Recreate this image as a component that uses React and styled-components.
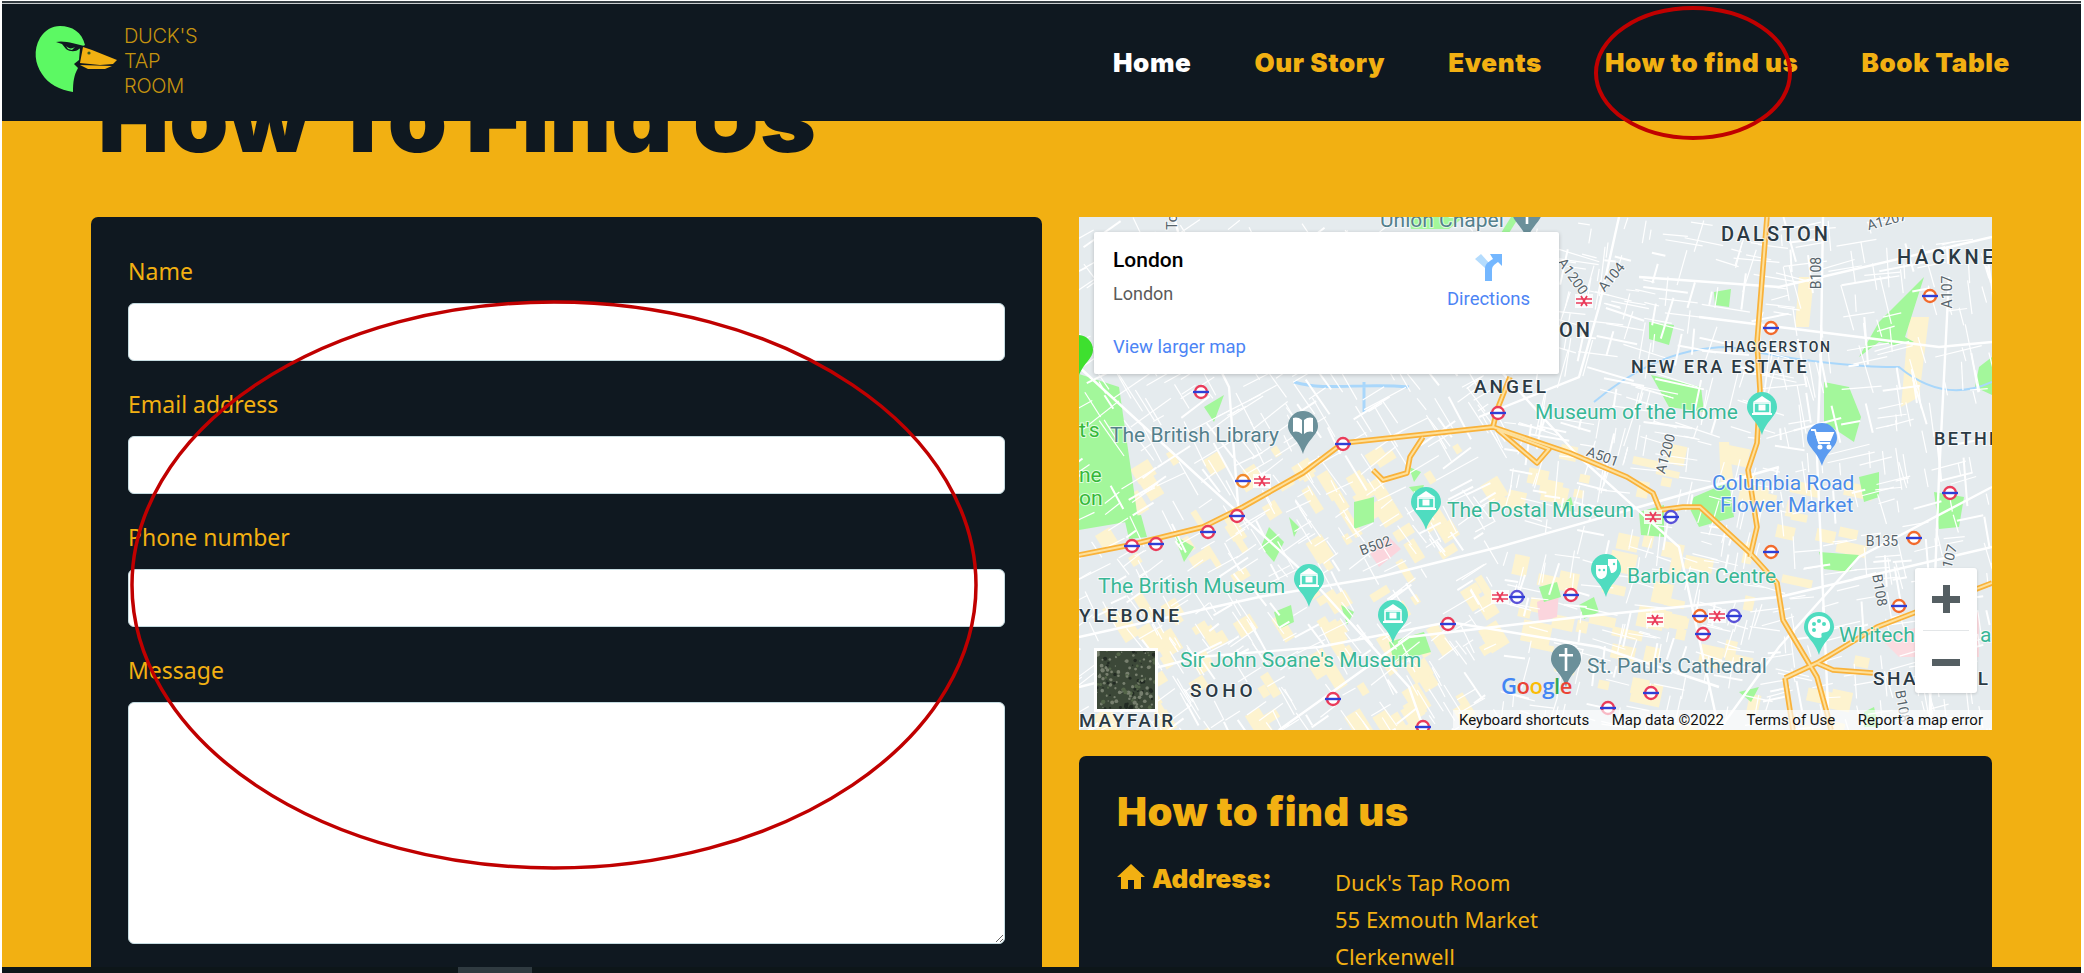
import styled, { createGlobalStyle } from "styled-components";

const YELLOW = "#f2b012";
const DARK = "#0f1820";

const GlobalStyle = createGlobalStyle`
	html, body {
		margin: 0;
		padding: 0;
		height: 100%;
		overflow: hidden;
		background: #fff;
	}
	* {
		box-sizing: border-box;
	}
`;

// --- map data, coordinates are px inside the 913x513 map ---
const seeded = seed => () => {
	seed |= 0;
	seed = (seed + 0x6d2b79f5) | 0;
	let t = Math.imul(seed ^ (seed >>> 15), 1 | seed);
	t = (t + Math.imul(t ^ (t >>> 7), 61 | t)) ^ t;
	return ((t ^ (t >>> 14)) >>> 0) / 4294967296;
};

const makeStreets = () => {
	const rnd = seeded(42);
	const list = [];
	for (let i = 0; i < 1300; i++) {
		const x = rnd() * 913;
		const y = rnd() * 513;
		const base = x < 420 ? 58 : x < 700 ? 12 : 80;
		const angle = ((base + (rnd() < 0.5 ? 0 : 90) + (rnd() - 0.5) * 14) * Math.PI) / 180;
		const len = 10 + rnd() * (y > 250 ? 26 : 40);
		list.push({
			x1: x,
			y1: y,
			x2: x + Math.cos(angle) * len,
			y2: y + Math.sin(angle) * len,
			w: rnd() < 0.2 ? 2 : 1.2,
		});
	}
	return list;
};
const streets = makeStreets();

// little pale yellow blocks, the built up parts of the map
const makeBlocks = () => {
	const rnd = seeded(11);
	const list = [];
	for (let i = 0; i < 190; i++) {
		const x = 20 + rnd() * 760;
		const y = 225 + rnd() * 285;
		list.push({
			x,
			y,
			w: 8 + rnd() * 24,
			h: 6 + rnd() * 16,
			rot: x < 420 ? 58 : 12,
		});
	}
	return list;
};
const blocks = makeBlocks();

const mainRoads = [
	"M0 150 L120 260 L230 360 L330 470 L345 513",
	"M95 0 L130 130 L150 170 L160 300",
	"M300 60 L400 130 L500 240 L600 330 L640 513",
	"M540 0 L520 90 L500 160 L400 200",
	"M0 420 L180 380 L300 360 L420 330 L560 290 L700 250",
	"M200 513 L330 420 L500 400 L700 380 L913 330",
	"M0 470 L120 440 L240 430 L370 405 L520 430 L640 470",
	"M744 0 L742 130 L738 240 L750 513",
	"M620 100 L700 110 L860 130 L913 125",
	"M560 60 L700 70 L913 20",
	"M870 60 L860 260 L850 513",
	"M640 513 L700 430 L780 340 L913 270",
];

const orangeRoads = [
	"M0 338 L51 328 L124 310 L164 290 L224 256 L264 226 L414 210 L491 236 L548 260 L574 276 L581 293 L604 290 L621 290 L671 336 L698 366 L704 403 L738 460 L748 496 L752 513",
	"M688 0 L678 126 L681 173 L678 226 L669 253 L678 310 L671 340",
	"M706 461 L738 446 L798 410 L913 366",
	"M738 446 L754 453 L794 456",
	"M706 461 L714 513",
	"M414 210 L418 193 L431 160",
	"M344 220 L331 240 L328 256 L304 263 L294 253",
	"M419 213 L470 232 L458 246 Z",
];

const parks = [
	"M0 157 L40 170 L52 253 L59 303 L0 313 Z",
	"M330 0 L385 0 L370 12 L332 12 Z",
	"M432 0 L440 0 L415 40 L404 45 Z",
	"M570 105 L595 108 L590 128 L570 122 Z",
	"M572 158 L622 170 L625 195 L590 190 Z",
	"M780 140 L800 105 L845 60 L826 120 L835 125 L815 128 L800 125 Z",
	"M745 165 L770 170 L782 200 L775 225 L745 205 Z",
	"M913 140 L900 150 L896 170 L913 178 Z",
	"M635 75 L652 72 L650 90 L636 88 Z",
	"M125 190 L145 178 L135 205 Z",
	"M330 250 L342 255 L335 265 Z",
	"M190 310 L205 325 L195 345 L182 330 Z",
	"M210 300 L220 310 L215 320 Z",
	"M275 285 L295 280 L295 305 L275 312 Z",
	"M330 270 L345 268 L340 282 Z",
	"M95 318 L115 330 L105 345 Z",
	"M195 395 L212 388 L215 405 L200 412 Z",
	"M262 388 L275 395 L268 408 Z",
	"M310 425 L345 415 L352 435 L315 445 Z",
	"M45 300 L62 298 L68 320 L50 322 Z",
	"M615 280 L650 265 L655 300 L620 310 L610 290 Z",
	"M480 290 L492 280 L496 296 Z",
	"M560 295 L585 288 L585 320 L562 318 Z",
	"M500 388 L515 380 L520 395 L505 402 Z",
	"M780 260 L800 255 L800 280 L785 285 Z",
	"M855 275 L885 280 L880 310 L860 312 Z",
	"M740 335 L780 338 L770 355 L745 352 Z",
	"M785 495 L795 490 L800 510 L785 510 Z",
	"M460 370 L478 365 L482 380 L465 385 Z",
	"M660 475 L680 470 L672 485 Z",
];

const tubes = [
	[122, 175, "#ea3b5a"], [264, 227, "#ea3b5a"], [419, 196, "#ea3b5a"],
	[851, 79, "#f26a2c"], [692, 111, "#f26a2c"], [164, 264, "#f28a2c"],
	[158, 299, "#ea3b5a"], [129, 315, "#ea3b5a"], [77, 327, "#ea3b5a"],
	[53, 329, "#ea3b5a"], [369, 407, "#ea3b5a"], [438, 380, "#5a52d8"],
	[492, 378, "#ea3b5a"], [254, 482, "#ea3b5a"], [344, 510, "#ea3b5a"],
	[592, 300, "#5a52d8"], [692, 335, "#f26a2c"], [871, 276, "#ea3b5a"],
	[835, 321, "#f26a2c"], [820, 389, "#f26a2c"], [621, 399, "#f26a2c"],
	[655, 399, "#5a52d8"], [624, 417, "#ea3b5a"], [572, 476, "#ea3b5a"],
	[529, 491, "#ea3b5a"],
];

const rails = [[505, 84], [183, 264], [421, 380], [574, 300], [638, 399], [576, 403]];

const TEAL_PIN = "#4fdcc0";
const GREY_PIN = "#6b909a";
const BLUE_PIN = "#5b9bf0";

const pins = [
	[683, 190, TEAL_PIN, "museum"],
	[347, 285, TEAL_PIN, "museum"],
	[230, 362, TEAL_PIN, "museum"],
	[314, 398, TEAL_PIN, "museum"],
	[527, 352, TEAL_PIN, "masks"],
	[740, 410, TEAL_PIN, "palette"],
	[224, 209, GREY_PIN, "book"],
	[448, -5, GREY_PIN, "cross"],
	[487, 442, GREY_PIN, "cross"],
	[743, 221, BLUE_PIN, "cart"],
	[-1, 133, "#3ee02f", "none"],
];

const areaLabels = [
	["DALSTON", 642, 24, 20, 3],
	["HACKNEY", 818, 47, 20, 3.6],
	["ISLINGTON", 385, 120, 20, 3],
	["NEW ERA ESTATE", 552, 156, 18, 2.4],
	["HAGGERSTON", 645, 135, 14, 1.6],
	["ANGEL", 395, 176, 19, 3],
	["BETHNAL", 855, 228, 18, 2.4],
	["YLEBONE", 0, 405, 19, 3],
	["SOHO", 111, 480, 19, 3.8],
	["MAYFAIR", 0, 510, 19, 2.6],
	["SHADWELL", 794, 468, 19, 2.4],
];

const placeLabels = [
	["Museum of the Home", 456, 202, "#38b796"],
	["The Postal Museum", 368, 300, "#38b796"],
	["The British Museum", 19, 376, "#38b796"],
	["Sir John Soane's Museum", 101, 450, "#38b796"],
	["Barbican Centre", 548, 366, "#38b796"],
	["Whitechapel", 760, 425, "#38b796"],
	["al", 901, 425, "#38b796"],
	["The British Library", 31, 225, "#54808c"],
	["St. Paul's Cathedral", 508, 456, "#54808c"],
	["Union Chapel", 301, 10, "#54808c"],
	["Columbia Road", 633, 273, "#4a8be8"],
	["Flower Market", 641, 295, "#4a8be8"],
	["t's", 0, 220, "#35b83a"],
	["ne", 0, 265, "#35b83a"],
	["on", 0, 288, "#35b83a"],
];

const roadCodes = [
	["A104", 536, 63, -50],
	["A1200", 490, 62, 55],
	["B108", 742, 56, -90],
	["A107", 873, 75, -90],
	["A1207", 809, 8, -15],
	["A501", 522, 244, 20],
	["A1200", 591, 238, -75],
	["B502", 298, 333, -20],
	["B135", 803, 329, 0],
	["B108", 796, 374, 80],
	["A107", 874, 345, -75],
	["B108", 819, 490, 80],
	["To", 98, 5, -90],
];

const PinGlyph = ({ type }) => {
	if (type === "museum") {
		return (
			<g fill="#fff">
				<path d="M-9 -5 L0 -11 L9 -5 Z" />
				<rect x="-8" y="-4" width="16" height="10" fill="none" stroke="#fff" strokeWidth="1.6" />
				<rect x="-3.5" y="-2.5" width="7" height="6" />
				<rect x="-10" y="6" width="20" height="2" />
			</g>
		);
	}
	if (type === "book") {
		return <path d="M-1 -6 C-4 -9 -8 -9 -10 -8 V6 C-8 5 -4 5 -1 8 Z M1 -6 C4 -9 8 -9 10 -8 V6 C8 5 4 5 1 8 Z" fill="#fff" />;
	}
	if (type === "cross") {
		return <path d="M-1.3 -11 H1.3 V-5 H7 V-2.6 H1.3 V12 H-1.3 V-2.6 H-7 V-5 H-1.3 Z" fill="#fff" />;
	}
	if (type === "cart") {
		return (
			<g fill="none" stroke="#fff" strokeWidth="1.8">
				<path d="M-11 -8 H-7 L-3 5 H8" />
				<path d="M-6 -5 H11 L8 2 H-4 Z" fill="#fff" />
				<circle cx="-2" cy="9" r="1.6" fill="#fff" />
				<circle cx="7" cy="9" r="1.6" fill="#fff" />
			</g>
		);
	}
	if (type === "masks") {
		return (
			<g fill="#fff">
				<path d="M-10 -4 H1 V3 C1 8 -3 10 -5 10 C-8 10 -10 7 -10 3 Z" />
				<path d="M2 -10 H11 V-2 C11 2 8 4 5 4 L3 -3 H2 Z" />
				<circle cx="-6.5" cy="1" r="1.2" fill={TEAL_PIN} />
				<circle cx="-2" cy="1" r="1.2" fill={TEAL_PIN} />
				<circle cx="8" cy="-5" r="1.2" fill={TEAL_PIN} />
			</g>
		);
	}
	if (type === "palette") {
		return (
			<g>
				<path d="M0 -11 C8 -11 12 -5 11 1 C10 6 5 5 3 6 C1 8 5 11 0 11 C-7 11 -11 6 -11 0 C-11 -6 -7 -11 0 -11 Z" fill="#fff" />
				<circle cx="-5" cy="-3" r="2" fill={TEAL_PIN} />
				<circle cx="0" cy="-6" r="2" fill={TEAL_PIN} />
				<circle cx="5" cy="-3" r="2" fill={TEAL_PIN} />
				<circle cx="-5" cy="3" r="2" fill={TEAL_PIN} />
			</g>
		);
	}
	return null;
};

const MapDrawing = () => (
	<MapSvg viewBox="0 0 913 513">
		<rect width="913" height="513" fill="#e5ebee" />
		{blocks.map((b, i) => (
			<rect
				key={i}
				x={b.x}
				y={b.y}
				width={b.w}
				height={b.h}
				fill="#fdf3cf"
				transform={`rotate(${b.rot} ${b.x} ${b.y})`}
			/>
		))}
		<path d="M640 225 L650 225 L655 270 L642 270 Z M720 60 L735 60 L730 110 L716 110 Z M830 100 L850 100 L840 180 L822 190 Z" fill="#fdf3cf" />
		<path d="M290 335 L310 320 L322 332 L300 350 Z" fill="#fbd5dd" />
		<path d="M458 385 L480 375 L478 400 L460 405 Z" fill="#fbd5dd" />
		<path d="M800 420 L900 395 L900 440 L820 440 Z" fill="#fbdbe0" />
		{parks.map((d, i) => (
			<path key={i} d={d} fill="#a3f79b" />
		))}
		<path
			d="M515 185 C545 160 590 130 650 130 C700 140 760 150 820 150 C850 175 880 180 913 165"
			fill="none"
			stroke="#a9d7fb"
			strokeWidth="2"
		/>
		<path d="M215 165 C250 175 280 165 330 170 M285 165 V195" fill="none" stroke="#a9d7fb" strokeWidth="3" />
		{streets.map((s, i) => (
			<line key={i} x1={s.x1} y1={s.y1} x2={s.x2} y2={s.y2} stroke="#fff" strokeWidth={s.w} />
		))}
		{mainRoads.map((d, i) => (
			<path key={i} d={d} fill="none" stroke="#fff" strokeWidth="2.4" />
		))}
		{orangeRoads.map((d, i) => (
			<path key={i} d={d} fill="none" stroke="#f9b23a" strokeWidth="5.5" strokeLinejoin="round" />
		))}
		{orangeRoads.map((d, i) => (
			<path key={i} d={d} fill="none" stroke="#fde09c" strokeWidth="2" strokeLinejoin="round" />
		))}
		{rails.map(([x, y], i) => (
			<g key={i}>
				<rect x={x - 9} y={y - 7} width="18" height="14" fill="#fff" opacity="0.8" />
				<path
					d={`M${x - 8} ${y - 2} H${x + 8} M${x - 8} ${y + 2} H${x + 8} M${x - 3} ${y - 5} L${x + 3} ${y + 5} M${x + 3} ${y - 5} L${x - 3} ${y + 5}`}
					stroke="#ea3b5a"
					strokeWidth="1.7"
				/>
			</g>
		))}
		{tubes.map(([x, y, color], i) => (
			<g key={i}>
				<circle cx={x} cy={y} r="6" fill="#fff" stroke={color} strokeWidth="2.4" />
				<rect x={x - 8} y={y - 1.2} width="16" height="2.4" fill="#2f3fd6" />
			</g>
		))}
		{pins.map(([x, y, color, type], i) => (
			<g key={i} transform={`translate(${x} ${y})`}>
				<path d="M-15 0 A15 15 0 1 1 15 0 C15 9 4 14 0 28 C-4 14 -15 9 -15 0 Z" fill={color} />
				<PinGlyph type={type} />
			</g>
		))}
		{areaLabels.map(([t, x, y, size, ls]) => (
			<MapLabel key={t} x={x} y={y} fontSize={size} letterSpacing={ls} fontWeight="500" fill="#2b3a44">
				{t}
			</MapLabel>
		))}
		{placeLabels.map(([t, x, y, color]) => (
			<MapLabel key={t} x={x} y={y} fontSize="21" fill={color}>
				{t}
			</MapLabel>
		))}
		{roadCodes.map(([t, x, y, rot], i) => (
			<MapLabel key={i} fontSize="14" fill="#56646b" textAnchor="middle" transform={`translate(${x} ${y}) rotate(${rot})`}>
				{t}
			</MapLabel>
		))}
		<GoogleMark x="422" y="477">
			<tspan fill="#4285f4">G</tspan>
			<tspan fill="#ea4335">o</tspan>
			<tspan fill="#fbbc05">o</tspan>
			<tspan fill="#4285f4">g</tspan>
			<tspan fill="#34a853">l</tspan>
			<tspan fill="#ea4335">e</tspan>
		</GoogleMark>
	</MapSvg>
);

const SatelliteTile = () => {
	const rnd = seeded(7);
	const dots = Array.from({ length: 160 }, () => [rnd() * 58, rnd() * 58, 0.6 + rnd() * 1.6, rnd()]);
	return (
		<svg width="58" height="58" viewBox="0 0 58 58">
			<rect width="58" height="58" fill="#3c4838" />
			{dots.map(([x, y, r, c], i) => (
				<circle key={i} cx={x} cy={y} r={r} fill={c > 0.6 ? "#78806f" : c > 0.3 ? "#232b24" : "#55664a"} />
			))}
		</svg>
	);
};

const DuckLogo = () => (
	<svg width="86" height="70" viewBox="33 24 86 70">
		<path
			d="M60 26 C72 26 82 32 85 45 L80 48 L79 60 L74 64 L78 68 C74 75 73 82 73 92 C60 90 48 84 42 74 C35 64 33 50 40 38 C45 30 52 26 60 26 Z"
			fill="#5cf963"
		/>
		<path d="M56 42 C64 40 76 44 85 46 L79 49 C76 52 70 52 66 49 L62 44 Z" fill={DARK} />
		<path d="M66 46 C69 49 72 49 75 47 L72 50 L68 49 Z" fill="#5cf963" />
		<path d="M83 47 L92 50 L117 60 L113 64 L100 65 L80 63 Z" fill={YELLOW} />
		<path d="M80 65 L112 66 L105 69 L88 69 Z" fill={YELLOW} />
		<circle cx="89" cy="53" r="1.6" fill="#3a5a20" />
	</svg>
);

const DirectionsIcon = () => (
	<svg width="27" height="28" viewBox="0 0 27 28">
		<path d="M0 6 L6 1 L15 11 V15 L10 15 Z" fill="#b5dcfd" />
		<path d="M10 28 V16 C10 11 13 9 18 6 L15 1 H27 V13 L23 9 C19 12 17 13 17 17 V28 Z" fill="#74b7ff" />
	</svg>
);

const App = () => (
	<Frame>
		<GlobalStyle />
		<TopLine />
		<Nav>
			<Brand>
				<DuckLogo />
				<BrandText>
					<span>DUCK'S</span>
					<span>TAP</span>
					<span>ROOM</span>
				</BrandText>
			</Brand>
			<NavLinks>
				<NavLink href="#" $active>Home</NavLink>
				<NavLink href="#">Our Story</NavLink>
				<NavLink href="#">Events</NavLink>
				<NavLink href="#">How to find us</NavLink>
				<NavLink href="#">Book Table</NavLink>
			</NavLinks>
		</Nav>
		<Main>
			<PageTitle>How To Find Us</PageTitle>
			<Columns>
				<FormCard>
					<Field>
						<FieldLabel>Name</FieldLabel>
						<TextInput type="text" />
					</Field>
					<Field>
						<FieldLabel>Email address</FieldLabel>
						<TextInput type="email" />
					</Field>
					<Field>
						<FieldLabel>Phone number</FieldLabel>
						<TextInput type="text" />
					</Field>
					<Field>
						<FieldLabel>Message</FieldLabel>
						<MessageInput />
					</Field>
				</FormCard>
				<SideColumn>
					<MapBox>
						<MapDrawing />
						<PlaceCard>
							<PlaceInfo>
								<PlaceName>London</PlaceName>
								<PlaceSub>London</PlaceSub>
								<MapLink>View larger map</MapLink>
							</PlaceInfo>
							<Directions>
								<DirectionsIcon />
								<MapLink>Directions</MapLink>
							</Directions>
						</PlaceCard>
						<Satellite>
							<SatelliteTile />
						</Satellite>
						<ZoomBox>
							<ZoomButton>
								<ZoomBar />
								<ZoomBar $upright />
							</ZoomButton>
							<ZoomDivider />
							<ZoomButton>
								<ZoomBar />
							</ZoomButton>
						</ZoomBox>
						<Attribution>
							<span>Keyboard shortcuts</span>
							<span>Map data ©2022</span>
							<span>Terms of Use</span>
							<span>Report a map error</span>
						</Attribution>
					</MapBox>
					<InfoCard>
						<InfoTitle>How to find us</InfoTitle>
						<InfoRow>
							<InfoLabel>
								<svg width="28" height="25" viewBox="0 0 28 25">
									<path d="M14 0 L28 13 H24 V25 H17 V16 H11 V25 H4 V13 H0 Z" fill={YELLOW} />
								</svg>
								Address:
							</InfoLabel>
							<InfoValue>
								<span>Duck's Tap Room</span>
								<span>55 Exmouth Market</span>
								<span>Clerkenwell</span>
							</InfoValue>
						</InfoRow>
					</InfoCard>
				</SideColumn>
			</Columns>
		</Main>
		<ScrollBar>
			<ScrollThumb />
		</ScrollBar>
		<Annotations viewBox="0 0 2084 973">
			<ellipse cx="1693" cy="73" rx="97" ry="65" fill="none" stroke="#c00000" strokeWidth="4" />
			<ellipse cx="554" cy="585" rx="422" ry="283" fill="none" stroke="#c00000" strokeWidth="3.5" />
		</Annotations>
	</Frame>
);

const Frame = styled.div`
	position: relative;
	display: flex;
	flex-direction: column;
	height: 100vh;
	overflow: hidden;
	border-left: 2px solid #fff;
	border-right: 3px solid #fff;
	background: ${YELLOW};
`;

const TopLine = styled.div`
	flex: none;
	height: 4px;
	background: linear-gradient(#fff 0 1px, #333b40 1px 3px, #c9cdcf 3px 4px);
`;

const Nav = styled.nav`
	flex: none;
	position: relative;
	z-index: 2;
	display: flex;
	justify-content: space-between;
	height: 117px;
	padding: 20px 71px 0 31px;
	background: ${DARK};
`;

const Brand = styled.div`
	display: flex;
	gap: 5px;
	height: 70px;
`;

const BrandText = styled.div`
	display: flex;
	flex-direction: column;
	font-family: "Inter", sans-serif;
	font-size: 20px;
	font-weight: 300;
	line-height: 25px;
	letter-spacing: -0.3px;
	color: #c4930f;
`;

const NavLinks = styled.div`
	display: flex;
	gap: 63px;
	padding-top: 23px;
`;

const NavLink = styled.a`
	font-family: "Inter", sans-serif;
	font-size: 26px;
	font-weight: 900;
	line-height: 32px;
	letter-spacing: 0.6px;
	text-decoration: none;
	color: ${props => (props.$active ? "#fff" : YELLOW)};
`;

const Main = styled.main`
	flex: 1;
	min-height: 0;
	overflow: hidden;
	padding: 0 89px;
`;

const PageTitle = styled.h1`
	margin: -51px 0 0 7px;
	font-family: "Inter", sans-serif;
	font-size: 95px;
	font-weight: 900;
	line-height: 96px;
	color: ${DARK};
`;

const Columns = styled.div`
	display: grid;
	grid-template-columns: 951px 913px;
	gap: 37px;
	margin-top: 51px;
`;

const FormCard = styled.form`
	display: flex;
	flex-direction: column;
	gap: 27px;
	padding: 38px 37px 24px;
	border-radius: 7px;
	background: ${DARK};
`;

const Field = styled.div`
	display: flex;
	flex-direction: column;
	gap: 15px;
`;

const FieldLabel = styled.label`
	font-family: "Noto Sans", sans-serif;
	font-size: 23px;
	line-height: 33px;
	color: ${YELLOW};
`;

const TextInput = styled.input`
	height: 58px;
	border: 1px solid #c5dbe0;
	border-radius: 6px;
	outline: none;
	background: #fff;
`;

const MessageInput = styled.textarea`
	height: 242px;
	border: 1px solid #c5dbe0;
	border-radius: 6px;
	outline: none;
	background: #fff;
`;

const SideColumn = styled.div`
	display: flex;
	flex-direction: column;
	gap: 26px;
`;

const MapBox = styled.div`
	position: relative;
	height: 513px;
	overflow: hidden;
`;

const MapSvg = styled.svg`
	display: block;
	width: 913px;
	height: 513px;
`;

const MapLabel = styled.text`
	font-family: "Roboto", sans-serif;
	paint-order: stroke;
	stroke: #ffffffaa;
	stroke-width: 2px;
`;

const GoogleMark = styled.text`
	font-family: "Open Sans", sans-serif;
	font-size: 22px;
	font-weight: 600;
	letter-spacing: -0.5px;
`;

const PlaceCard = styled.div`
	position: absolute;
	top: 15px;
	left: 15px;
	display: flex;
	justify-content: space-between;
	width: 465px;
	height: 142px;
	padding: 15px 29px 0 19px;
	border-radius: 2px;
	background: #fff;
	font-family: "Roboto", sans-serif;
	box-shadow: 0 1px 4px rgba(0, 0, 0, 0.2);
`;

const PlaceInfo = styled.div`
	display: flex;
	flex-direction: column;
`;

const PlaceName = styled.div`
	font-size: 21px;
	font-weight: 500;
	line-height: 26px;
	color: #000;
`;

const PlaceSub = styled.div`
	margin-top: 9px;
	font-size: 18px;
	line-height: 24px;
	color: #5b5b5b;
`;

const MapLink = styled.div`
	font-size: 18.5px;
	line-height: 24px;
	color: #4c84f5;
	${PlaceSub} + & {
		margin-top: 29px;
	}
`;

const Directions = styled.div`
	display: flex;
	flex-direction: column;
	align-items: center;
	gap: 6px;
	padding-top: 6px;
`;

const Satellite = styled.div`
	position: absolute;
	top: 431px;
	left: 15px;
	width: 64px;
	height: 64px;
	border: 3px solid #fff;
	line-height: 0;
`;

const ZoomBox = styled.div`
	position: absolute;
	top: 351px;
	left: 836px;
	display: flex;
	flex-direction: column;
	align-items: center;
	width: 62px;
	height: 125px;
	border-radius: 3px;
	background: #fff;
	box-shadow: 0 1px 3px rgba(0, 0, 0, 0.15);
`;

const ZoomButton = styled.div`
	position: relative;
	display: flex;
	align-items: center;
	justify-content: center;
	flex: 1;
	width: 100%;
`;

const ZoomBar = styled.span`
	position: absolute;
	width: ${props => (props.$upright ? "7px" : "28px")};
	height: ${props => (props.$upright ? "28px" : "7px")};
	background: #555f63;
`;

const ZoomDivider = styled.div`
	width: 46px;
	height: 1px;
	background: #e3e6e8;
`;

const Attribution = styled.div`
	position: absolute;
	right: 0;
	bottom: 0;
	display: flex;
	justify-content: space-between;
	width: 539px;
	height: 20px;
	padding: 0 9px 0 6px;
	background: rgba(255, 255, 255, 0.65);
	font-family: "Roboto", sans-serif;
	font-size: 15px;
	line-height: 20px;
	color: #111;
`;

const InfoCard = styled.section`
	padding: 33px 38px 30px;
	border-radius: 7px;
	background: ${DARK};
	color: ${YELLOW};
`;

const InfoTitle = styled.h2`
	margin: 0 0 29px;
	font-family: "Inter", sans-serif;
	font-size: 40px;
	font-weight: 900;
	line-height: 46px;
	letter-spacing: 0.5px;
`;

const InfoRow = styled.div`
	display: grid;
	grid-template-columns: 218px 1fr;
`;

const InfoLabel = styled.div`
	display: flex;
	align-items: flex-start;
	gap: 7px;
	font-family: "Inter", sans-serif;
	font-size: 26px;
	font-weight: 900;
	line-height: 30px;
`;

const InfoValue = styled.div`
	display: flex;
	flex-direction: column;
	font-family: "Noto Sans", sans-serif;
	font-size: 22px;
	line-height: 37px;
`;

const ScrollBar = styled.div`
	flex: none;
	height: 6px;
	padding-left: 456px;
	background: #0d1619;
`;

const ScrollThumb = styled.div`
	width: 74px;
	height: 6px;
	background: #2f3a40;
`;

const Annotations = styled.svg`
	position: absolute;
	top: 0;
	left: -2px;
	z-index: 3;
	width: 2084px;
	height: 973px;
	pointer-events: none;
`;

export default App;
